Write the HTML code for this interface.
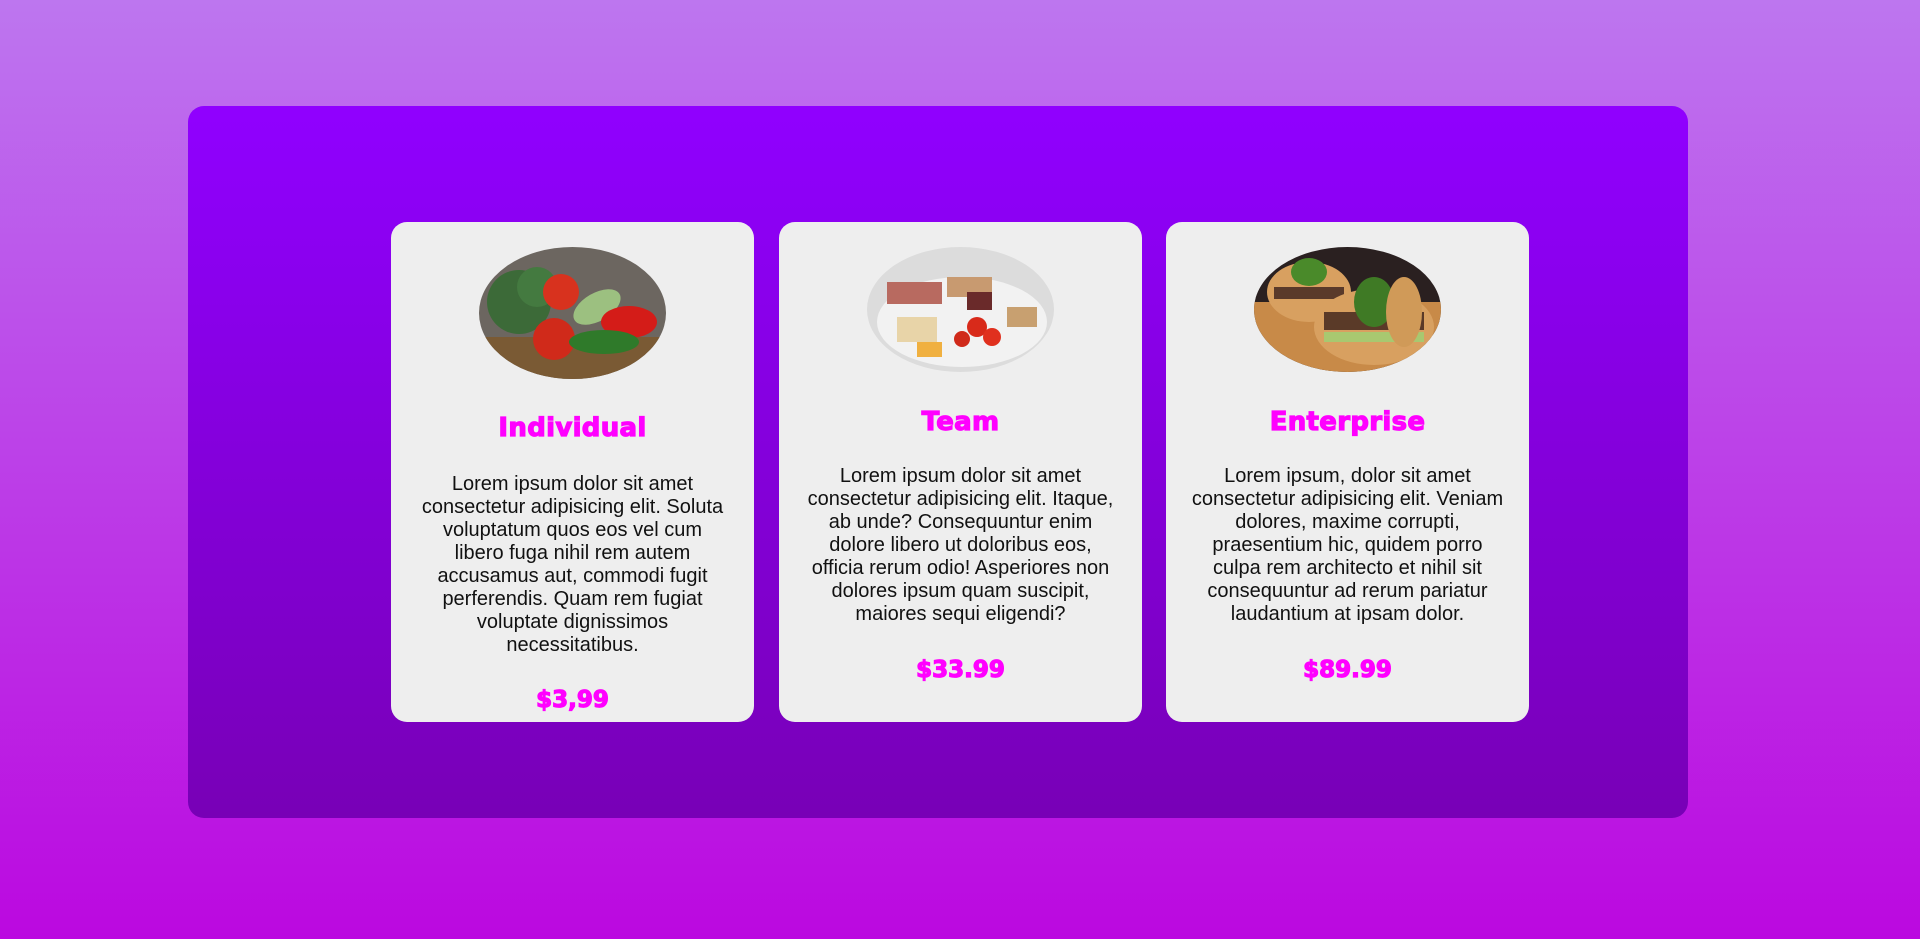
<!DOCTYPE html>
<html><head><meta charset="utf-8">
<style>
*{margin:0;padding:0;box-sizing:border-box}
body{width:1920px;height:939px;overflow:hidden;background:linear-gradient(#bd76ef,#bb08e0);font-family:"Liberation Sans",Arial,sans-serif;position:relative}
.wrap{position:absolute;left:188px;top:106px;width:1500px;height:712px;border-radius:16px;background:linear-gradient(#9000ff,#7800b6)}
.card{position:absolute;top:222px;width:363px;height:500px;background:#eeeeee;border-radius:16px}
.img{position:absolute;left:88px;width:187px;border-radius:50%;overflow:hidden}
.img svg{display:block}
h2{position:absolute;left:0;right:0;text-align:center;color:#ff00ff;font-family:"DejaVu Sans",sans-serif;font-weight:900;font-size:26px;line-height:30px;letter-spacing:0.3px;-webkit-text-stroke:1.2px #ff00ff}
p{position:absolute;left:25px;right:25px;text-align:center;color:#111;font-size:20px;line-height:23px}
.price{position:absolute;left:0;right:0;text-align:center;color:#ff00ff;font-family:"DejaVu Sans",sans-serif;font-weight:900;font-size:23px;line-height:28px;-webkit-text-stroke:1.2px #ff00ff}
</style></head><body>
<div class="wrap"></div>

<div class="card" style="left:391px">
 <div class="img" style="top:25px;height:132px">
  <svg width="187" height="132"><rect width="187" height="132" fill="#6c6660"/><rect y="90" width="187" height="42" fill="#7a5a34"/>
  <circle cx="40" cy="55" r="32" fill="#3c6a38"/><circle cx="58" cy="40" r="20" fill="#447a40"/>
  <circle cx="82" cy="45" r="18" fill="#d8321e"/><circle cx="75" cy="92" r="21" fill="#d02a1a"/>
  <ellipse cx="118" cy="60" rx="26" ry="14" fill="#9cc080" transform="rotate(-30 118 60)"/>
  <ellipse cx="150" cy="75" rx="28" ry="16" fill="#d41c18"/><ellipse cx="125" cy="95" rx="35" ry="12" fill="#2f7a2a"/></svg>
 </div>
 <h2 style="top:191px">Individual</h2>
 <p style="top:251px">Lorem ipsum dolor sit amet consectetur adipisicing elit. Soluta voluptatum quos eos vel cum libero fuga nihil rem autem accusamus aut, commodi fugit perferendis. Quam rem fugiat voluptate dignissimos necessitatibus.</p>
 <div class="price" style="top:464px">$3,99</div>
</div>

<div class="card" style="left:779px">
 <div class="img" style="top:25px;height:125px">
  <svg width="187" height="125"><rect width="187" height="125" fill="#dcdcdc"/><ellipse cx="95" cy="75" rx="85" ry="45" fill="#f2f2f2"/>
  <rect x="20" y="35" width="55" height="22" fill="#b86a60"/><rect x="80" y="30" width="45" height="20" fill="#c89a70"/>
  <rect x="100" y="45" width="25" height="18" fill="#6a2a2a"/>
  <circle cx="110" cy="80" r="10" fill="#d82a1a"/><circle cx="125" cy="90" r="9" fill="#e0301e"/><circle cx="95" cy="92" r="8" fill="#d02a1a"/>
  <rect x="30" y="70" width="40" height="25" fill="#e8d4a8"/><rect x="50" y="95" width="25" height="15" fill="#f0b040"/>
  <rect x="140" y="60" width="30" height="20" fill="#c8a070"/></svg>
 </div>
 <h2 style="top:185px">Team</h2>
 <p style="top:243px">Lorem ipsum dolor sit amet consectetur adipisicing elit. Itaque, ab unde? Consequuntur enim dolore libero ut doloribus eos, officia rerum odio! Asperiores non dolores ipsum quam suscipit, maiores sequi eligendi?</p>
 <div class="price" style="top:434px">$33.99</div>
</div>

<div class="card" style="left:1166px">
 <div class="img" style="top:25px;height:125px">
  <svg width="187" height="125"><rect width="187" height="125" fill="#2a2020"/><rect y="55" width="187" height="70" fill="#c88a48"/>
  <ellipse cx="55" cy="45" rx="42" ry="30" fill="#d8a060"/><rect x="20" y="40" width="70" height="12" fill="#5a3a2a"/>
  <ellipse cx="55" cy="25" rx="18" ry="14" fill="#4a8a2a"/>
  <ellipse cx="120" cy="80" rx="60" ry="38" fill="#d8a060"/><rect x="70" y="65" width="100" height="18" fill="#5a3a28"/>
  <rect x="70" y="85" width="100" height="10" fill="#a8c870"/>
  <ellipse cx="120" cy="55" rx="20" ry="25" fill="#3f7a25"/><ellipse cx="150" cy="65" rx="18" ry="35" fill="#d09a58"/></svg>
 </div>
 <h2 style="top:185px">Enterprise</h2>
 <p style="top:243px">Lorem ipsum, dolor sit amet consectetur adipisicing elit. Veniam dolores, maxime corrupti, praesentium hic, quidem porro culpa rem architecto et nihil sit consequuntur ad rerum pariatur laudantium at ipsam dolor.</p>
 <div class="price" style="top:434px">$89.99</div>
</div>
</body></html>
